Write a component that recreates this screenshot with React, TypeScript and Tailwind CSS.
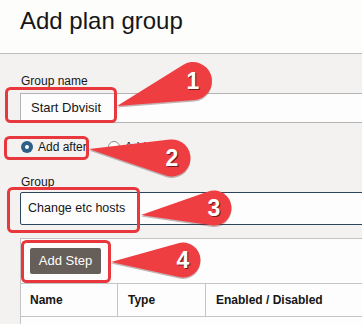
import React from 'react';

type Callout = { n: string; cx: number; cy: number; r: number; tx: number; ty: number };

const callouts: Callout[] = [
  { n: '1', cx: 193, cy: 81, r: 19, tx: 117, ty: 106 },
  { n: '2', cx: 172, cy: 158, r: 18.5, tx: 89, ty: 149 },
  { n: '3', cx: 214, cy: 208, r: 17.5, tx: 141, ty: 215 },
  { n: '4', cx: 183, cy: 260, r: 17.5, tx: 111, ty: 262 },
];

const boxes = [
  { x: 5, y: 87, w: 112, h: 36 },
  { x: 4, y: 136, w: 85, h: 24 },
  { x: 7, y: 187, w: 133, h: 46 },
  { x: 21, y: 240, w: 90, h: 43 },
];

// teardrop: tangent lines from the tip to the circle, then the long arc round
function tear({ cx, cy, r, tx, ty }: Callout) {
  const d = Math.hypot(tx - cx, ty - cy);
  const th = Math.atan2(ty - cy, tx - cx);
  const a = Math.acos(r / d);
  const p1 = [cx + r * Math.cos(th + a), cy + r * Math.sin(th + a)];
  const p2 = [cx + r * Math.cos(th - a), cy + r * Math.sin(th - a)];
  return `M${tx} ${ty} L${p1[0]} ${p1[1]} A${r} ${r} 0 1 1 ${p2[0]} ${p2[1]} Z`;
}

function Annotations() {
  return (
    <svg className="absolute left-0 top-0 pointer-events-none" width="362" height="324" viewBox="0 0 362 324">
      {boxes.map((b, i) => (
        <rect key={i} x={b.x + 1.5} y={b.y + 1.5} width={b.w - 3} height={b.h - 3} rx="4" fill="none" stroke="#e8383d" strokeWidth="3" />
      ))}
      {callouts.map((c) => (
        <g key={c.n}>
          <path d={tear(c)} fill="#5a2a2a" opacity="0.35" transform="translate(0 1.5)" />
          <path d={tear(c)} fill="#ef3e42" />
          <text x={c.cx + 1} y={c.cy + 9} textAnchor="middle" fontFamily="'Liberation Sans', Arial, sans-serif" fontWeight="700" fontSize="23" fill="#3a1010" opacity="0.7">
            {c.n}
          </text>
          <text x={c.cx} y={c.cy + 8} textAnchor="middle" fontFamily="'Liberation Sans', Arial, sans-serif" fontWeight="700" fontSize="23" fill="#ffffff">
            {c.n}
          </text>
        </g>
      ))}
    </svg>
  );
}

export default function App() {
  return (
    <div className="relative w-[362px] h-[324px] overflow-hidden bg-[#f3f2f1] font-['Liberation_Sans',Arial,sans-serif] text-[#161616]">
      <div className="h-[54px] border-b border-[#bdbdbd] bg-[#fdfdfc] pl-5 pt-[7px] text-[24px] leading-[28px]">
        Add plan group
      </div>
      <div className="pl-5">
        <div className="mt-[20px] mb-[5px] text-[12px] leading-[14px] pl-px">Group name</div>
        <div className="flex items-center w-[400px] h-[30px] border border-[#b3b3b3] bg-[#fdfdfd] pl-[10px] text-[13px]">
          Start Dbvisit
        </div>
        <div className="mt-[16px] flex items-center h-4 text-[12px]">
          <span className="ml-px w-3 h-3 rounded-full bg-[#2e5f86] flex items-center justify-center">
            <span className="w-1 h-1 rounded-full bg-white" />
          </span>
          <span className="ml-[5px]">Add after</span>
          <span className="ml-[21px] w-3 h-3 rounded-full border border-[#8a8a8a] bg-white" />
          <span className="ml-[5px]">Add before</span>
        </div>
        <div className="mt-[20px] mb-[3px] text-[12px] leading-[14px] pl-px">Group</div>
        <div className="flex items-center w-[400px] h-[33px] rounded-[2px] border border-[#2b4760] bg-[#fdfdfd] pl-[7px] text-[12.5px]">
          Change etc hosts
        </div>
        <div className="mt-[13px] w-[400px] h-[100px] bg-[#fdfdfd] border-t border-l border-[#c4c4c4]">
          <div className="pl-[9px] pt-[9px] pb-[9px]">
            <button className="w-[71px] h-[26px] rounded-[2px] bg-[#655e59] text-white text-[13px]">Add Step</button>
          </div>
          <div className="flex h-[34px] border-y border-[#c4c4c4] text-[12px] font-bold">
            <div className="w-[97px] border-r border-[#c4c4c4] pl-[9px] flex items-center">Name</div>
            <div className="w-[88px] border-r border-[#c4c4c4] pl-[10px] flex items-center">Type</div>
            <div className="flex-1 pl-[10px] flex items-center">Enabled / Disabled</div>
          </div>
        </div>
      </div>
      <Annotations />
    </div>
  );
}
